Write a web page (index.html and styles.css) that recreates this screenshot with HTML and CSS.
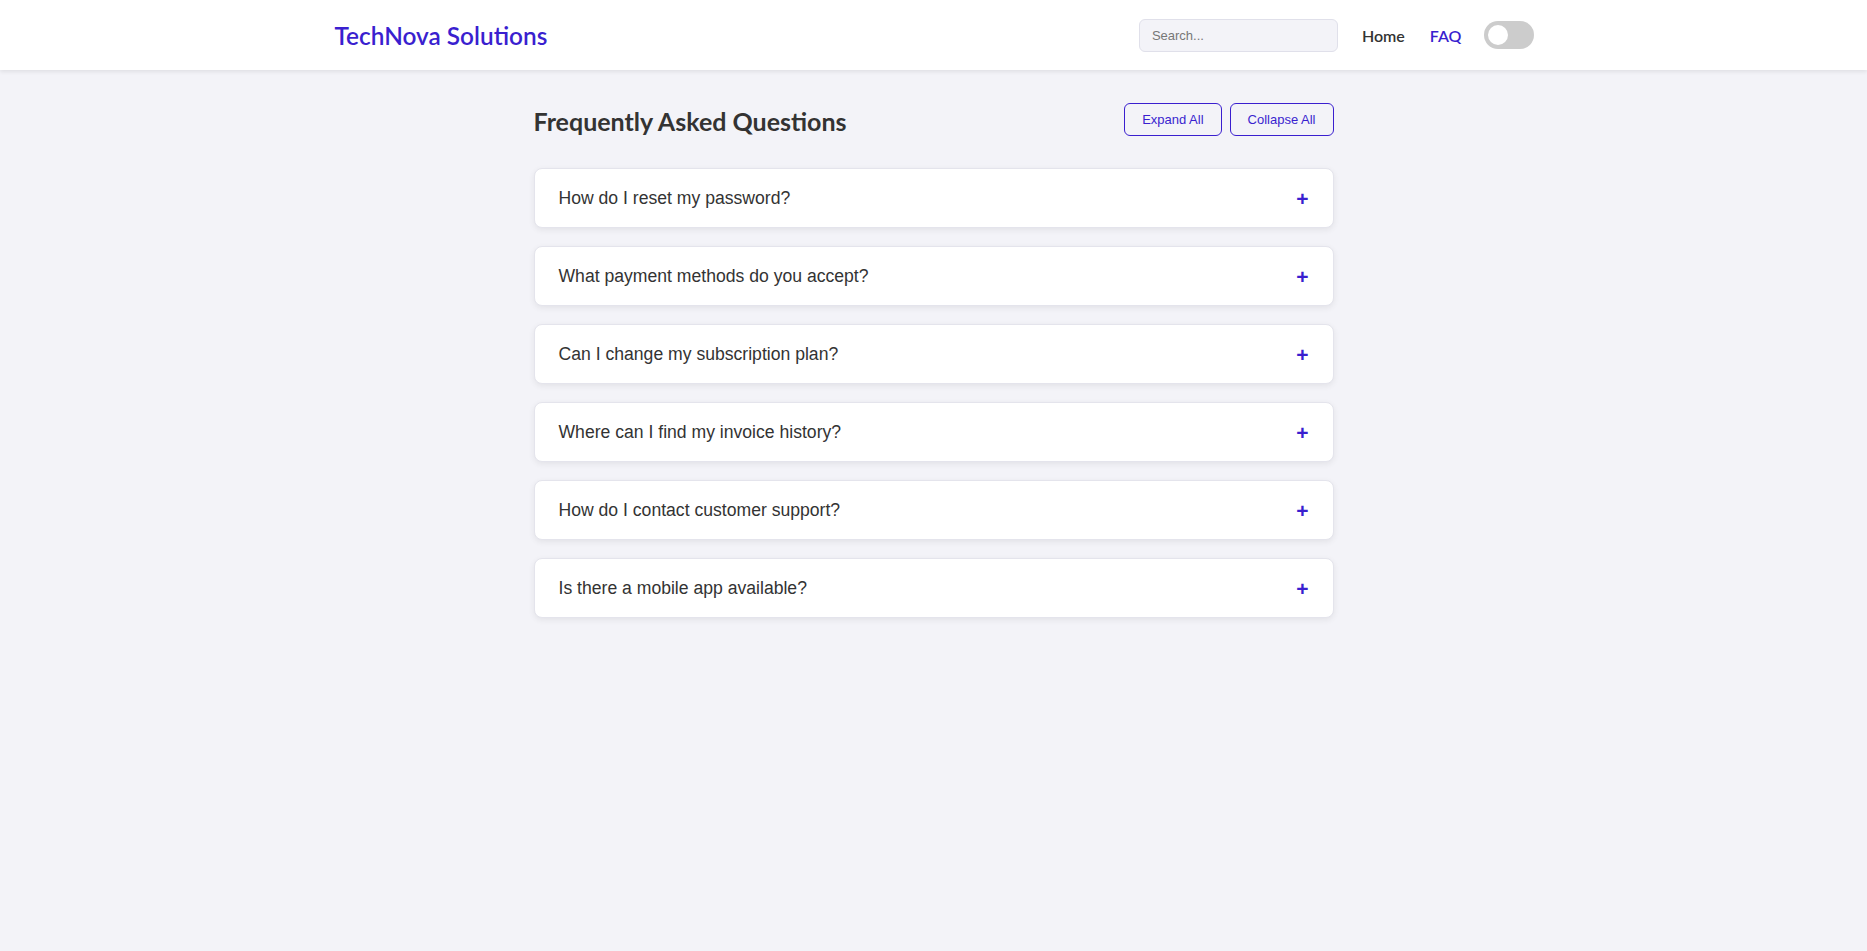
FILE: index.html
```html
<!DOCTYPE html>
<html lang="en">
<head>
<meta charset="utf-8">
<title>TechNova Solutions - FAQ</title>
<link rel="stylesheet" href="styles.css">
</head>
<body>
<header class="site-header">
  <div class="header-inner">
    <a class="logo" href="#">TechNova Solutions</a>
    <nav class="nav">
      <input class="search" type="text" placeholder="Search...">
      <a class="nav-link" href="#">Home</a>
      <a class="nav-link active" href="#">FAQ</a>
      <span class="toggle"><span class="knob"></span></span>
    </nav>
  </div>
</header>
<main class="main">
  <div class="faq-head">
    <h1 class="faq-title">Frequently Asked Questions</h1>
    <div class="faq-actions">
      <button class="btn-outline">Expand All</button>
      <button class="btn-outline">Collapse All</button>
    </div>
  </div>
  <div class="faq-list">
    <div class="faq-item"><button class="faq-q"><span>How do I reset my password?</span><span class="plus">+</span></button></div>
    <div class="faq-item"><button class="faq-q"><span>What payment methods do you accept?</span><span class="plus">+</span></button></div>
    <div class="faq-item"><button class="faq-q"><span>Can I change my subscription plan?</span><span class="plus">+</span></button></div>
    <div class="faq-item"><button class="faq-q"><span>Where can I find my invoice history?</span><span class="plus">+</span></button></div>
    <div class="faq-item"><button class="faq-q"><span>How do I contact customer support?</span><span class="plus">+</span></button></div>
    <div class="faq-item"><button class="faq-q"><span>Is there a mobile app available?</span><span class="plus">+</span></button></div>
  </div>
</main>
</body>
</html>
```
FILE: styles.css
```css
* { box-sizing: border-box; }
html, body { margin: 0; padding: 0; }
body {
  background: #f3f3f8;
  font-family: Lato, "Open Sans", sans-serif;
  color: #333;
  min-height: 951px;
}
.site-header {
  background: #fff;
  height: 70px;
  box-shadow: 0 2px 4px rgba(0,0,0,0.08);
}
.header-inner {
  max-width: 1200px;
  margin: 0 auto;
  height: 70px;
  display: flex;
  align-items: center;
  justify-content: space-between;
}
.logo {
  color: #3a1fcf;
  text-decoration: none;
  font-size: 24.4px;
  font-weight: 600;
  padding-left: 1px;
}
.nav {
  display: flex;
  align-items: center;
}
.search {
  width: 199px;
  height: 33px;
  border: 1px solid #e0e0ea;
  border-radius: 6px;
  background: #f3f3f8;
  padding: 0 12px;
  font-family: "Liberation Sans", Arial, sans-serif;
  font-size: 13px;
  color: #333;
  margin-right: 24px;
  outline: none;
}
.search::placeholder { color: #777; }
.nav-link {
  text-decoration: none;
  color: #333;
  font-size: 16px;
  font-weight: 600;
  margin-right: 25px;
}
.nav-link.active { color: #3a1fcf; margin-right: 22px; }
.toggle {
  display: inline-flex;
  align-items: center;
  width: 50px;
  height: 28px;
  border-radius: 14px;
  background: #ccc;
  padding: 0 4px;
}
.knob {
  width: 20px;
  height: 20px;
  border-radius: 50%;
  background: #fff;
}
.main {
  max-width: 800px;
  margin: 0 auto;
  padding-top: 33px;
}
.faq-head {
  display: flex;
  align-items: center;
  justify-content: space-between;
  margin-bottom: 32px;
}
.faq-title {
  margin: 0;
  padding-top: 3px;
  font-size: 25px;
  font-weight: 700;
  line-height: 1.2;
  color: #333;
}
.faq-actions {
  display: flex;
  gap: 8px;
}
.btn-outline {
  height: 33px;
  padding: 0 17px;
  border: 1px solid #3a1fcf;
  border-radius: 6px;
  background: transparent;
  color: #3a1fcf;
  font-family: "Liberation Sans", Arial, sans-serif;
  font-size: 13px;
}
.faq-list {
  display: flex;
  flex-direction: column;
  gap: 18px;
}
.faq-item {
  background: #fff;
  border: 1px solid #e4e4ec;
  border-radius: 8px;
  box-shadow: 0 2px 6px rgba(0,0,0,0.07);
  overflow: hidden;
}
.faq-q {
  width: 100%;
  display: flex;
  align-items: center;
  justify-content: space-between;
  background: transparent;
  border: 0;
  padding: 19px 24px;
  height: 58px;
  font-family: "Liberation Sans", Arial, sans-serif;
  font-size: 17.6px;
  color: #333;
  text-align: left;
}
.plus {
  color: #3a1fcf;
  font-weight: 700;
  font-size: 21px;
  line-height: 1;
}
```
